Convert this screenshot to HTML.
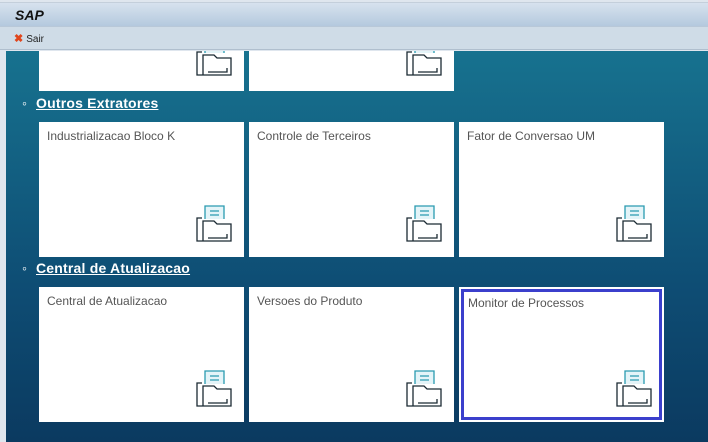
<!DOCTYPE html>
<html><head><style>
*{margin:0;padding:0;box-sizing:border-box}
body{width:708px;height:442px;overflow:hidden;font-family:"Liberation Sans",Arial,sans-serif;background:#dfe6ee;position:relative}
.title{position:absolute;left:0;top:2px;width:708px;height:24px;background:linear-gradient(#d7e2ee,#b4c9de);border-top:1px solid #c4cfdb}
.title b{position:absolute;left:15px;top:4px;font-style:italic;font-size:14px;color:#111}
.tb{position:absolute;left:0;top:26px;width:708px;height:24px;background:#cfdce7;border-top:1px solid #b8c8d8;border-bottom:1px solid #b0bfce}
.tb span{position:absolute;left:14px;top:5px;font-size:10px;color:#222}
.tb i{color:#e0461c;font-style:normal;font-weight:bold;font-size:11px;margin-right:3px}
.content{position:absolute;left:6px;top:51px;width:702px;height:391px;overflow:hidden;background:linear-gradient(#17728f,#0e4d74 60%,#0b3a60)}
.tile{position:absolute;width:205px;height:135px;background:#fff}
.tile p{position:absolute;left:8px;top:7px;font-size:12px;color:#555}
.tile svg{position:absolute;right:10px;bottom:14px}
.sel::after{content:"";position:absolute;left:2px;top:2px;right:2px;bottom:2px;border:3px solid #3b3fcc}
h2{position:absolute;font-size:14px;color:#fff;text-decoration:underline;font-weight:bold;letter-spacing:0.2px}
h2::before{content:"◦";position:absolute;left:-14px;top:0;font-size:14px;font-weight:bold;text-decoration:none}
</style></head><body>
<div class="title"><b>SAP</b></div>
<div class="tb"><span><i>✖</i>Sair</span></div>
<div class="content">
<div class="tile" style="left:33px;top:-95px"><svg width="40" height="38" viewBox="0 0 40 38"><use href="#ic"/></svg></div>
<div class="tile" style="left:243px;top:-95px"><svg width="40" height="38" viewBox="0 0 40 38"><use href="#ic"/></svg></div>
<h2 style="left:30px;top:44px">Outros Extratores</h2>
<div class="tile" style="left:33px;top:71px"><p>Industrializacao Bloco K</p><svg width="40" height="38" viewBox="0 0 40 38"><use href="#ic"/></svg></div>
<div class="tile" style="left:243px;top:71px"><p>Controle de Terceiros</p><svg width="40" height="38" viewBox="0 0 40 38"><use href="#ic"/></svg></div>
<div class="tile" style="left:453px;top:71px"><p>Fator de Conversao UM</p><svg width="40" height="38" viewBox="0 0 40 38"><use href="#ic"/></svg></div>
<h2 style="left:30px;top:209px">Central de Atualizacao</h2>
<div class="tile" style="left:33px;top:236px"><p>Central de Atualizacao</p><svg width="40" height="38" viewBox="0 0 40 38"><use href="#ic"/></svg></div>
<div class="tile" style="left:243px;top:236px"><p>Versoes do Produto</p><svg width="40" height="38" viewBox="0 0 40 38"><use href="#ic"/></svg></div>
<div class="tile sel" style="left:453px;top:236px"><p style="left:9px;top:9px">Monitor de Processos</p><svg width="40" height="38" viewBox="0 0 40 38"><use href="#ic"/></svg></div>
</div>
<svg width="0" height="0" style="position:absolute"><defs><g id="ic" fill="none" stroke-width="1.3">
<path d="M11 14V1H30V14" stroke="#2a9bb0" fill="#e4f4f8"/>
<path d="M16 6H25M16 10H25" stroke="#2a9bb0"/>
<path d="M8 13H3V36H9" stroke="#1b2a33"/>
<path d="M9 36V16H20L23 19H37V36H9" stroke="#1b2a33" fill="#fff"/>
<path d="M14 33H33V29" stroke="#1b2a33"/>
</g></defs></svg>
</body></html>
